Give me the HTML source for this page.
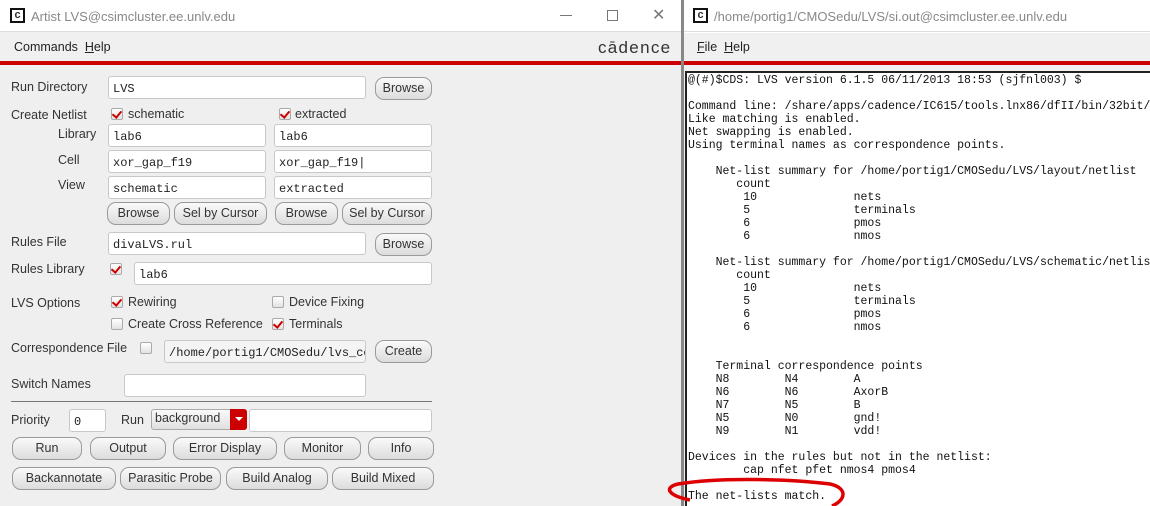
<!DOCTYPE html>
<html style="overflow:hidden;width:1150px;height:506px"><head><meta charset="utf-8"><style>
*{box-sizing:border-box;margin:0;padding:0}
body{width:1150px;height:506px;overflow:hidden;background:#fff;position:relative;font-family:"Liberation Sans",sans-serif;font-size:12.5px;color:#333}
.a{position:absolute;white-space:nowrap}
.in{position:absolute;background:#fff;border:1px solid #c8c8c8;border-radius:3px;font-family:"Liberation Mono",monospace;font-size:12px;color:#222;padding:5px 0 0 4px;height:23px;white-space:nowrap;overflow:hidden}
.bt{position:absolute;height:23px;border:1px solid #9a9a9a;border-radius:9px;background:linear-gradient(#fafafa,#dcdcdc);text-align:center;line-height:21px;font-size:12.5px;color:#333}
.cb{position:absolute;width:12px;height:12px;border:1px solid #aaa;border-radius:2px;background:linear-gradient(#fff,#e2e2e2)}
.cb.k::after{content:"";position:absolute;left:2px;top:0px;width:4px;height:7px;border-right:2.5px solid #c00;border-bottom:2.5px solid #c00;transform:rotate(40deg)}
.t{position:absolute;left:688px;font-family:"Liberation Mono",monospace;font-size:11.5px;line-height:13px;color:#111;white-space:pre}
.lbl{position:absolute;white-space:nowrap;line-height:14px}
</style></head><body>
<!-- left window -->
<div class="a" style="left:0;top:0;width:681px;height:506px;background:#efefef"></div>
<div class="a" style="left:0;top:0;width:681px;height:32px;background:#fff;border-bottom:1px solid #ddd"></div>
<div class="a" style="left:10px;top:8px;width:15px;height:15px;border:2px solid #111;font:bold 11px 'Liberation Sans';text-align:center;line-height:11px">c</div>
<div class="a" style="left:31px;top:9px;font-size:13px;color:#888">Artist LVS@csimcluster.ee.unlv.edu</div>
<div class="a" style="left:560px;top:15px;width:12px;height:1px;background:#777"></div>
<div class="a" style="left:607px;top:10px;width:11px;height:11px;border:1px solid #777"></div>
<div class="a" style="left:652px;top:5px;font-size:16px;color:#777">✕</div>
<div class="a" style="left:0;top:33px;width:681px;height:29px;background:#f0f0f0"></div>
<div class="a" style="left:14px;top:40px;font-size:12.5px;color:#222">Commands&nbsp;&nbsp;<u>H</u>elp</div>
<div class="a" style="left:598px;top:38px;font-size:17px;letter-spacing:1.3px;color:#333">cādence</div>
<div class="a" style="left:0;top:61px;width:681px;height:4px;background:#c00"></div>
<div class="a" style="left:681px;top:0;width:3px;height:506px;background:#888"></div>

<div class="lbl" style="left:11px;top:80px">Run Directory</div>
<div class="in" style="left:108px;top:76px;width:258px">LVS</div>
<div class="bt" style="left:375px;top:77px;width:57px">Browse</div>
<div class="lbl" style="left:11px;top:108px">Create Netlist</div>
<div class="cb k" style="left:111px;top:108px"></div><div class="lbl" style="left:128px;top:107px">schematic</div>
<div class="cb k" style="left:279px;top:108px"></div><div class="lbl" style="left:295px;top:107px">extracted</div>
<div class="lbl" style="left:58px;top:127px">Library</div>
<div class="in" style="left:108px;top:124px;width:158px">lab6</div>
<div class="in" style="left:274px;top:124px;width:158px">lab6</div>
<div class="lbl" style="left:58px;top:153px">Cell</div>
<div class="in" style="left:108px;top:150px;width:158px">xor_gap_f19</div>
<div class="in" style="left:274px;top:150px;width:158px">xor_gap_f19|</div>
<div class="lbl" style="left:58px;top:178px">View</div>
<div class="in" style="left:108px;top:176px;width:158px">schematic</div>
<div class="in" style="left:274px;top:176px;width:158px">extracted</div>
<div class="bt" style="left:107px;top:202px;width:63px">Browse</div>
<div class="bt" style="left:174px;top:202px;width:93px">Sel by Cursor</div>
<div class="bt" style="left:275px;top:202px;width:63px">Browse</div>
<div class="bt" style="left:342px;top:202px;width:90px">Sel by Cursor</div>
<div class="lbl" style="left:11px;top:235px">Rules File</div>
<div class="in" style="left:108px;top:232px;width:258px">divaLVS.rul</div>
<div class="bt" style="left:375px;top:233px;width:57px">Browse</div>
<div class="lbl" style="left:11px;top:262px">Rules Library</div>
<div class="cb k" style="left:110px;top:263px"></div>
<div class="in" style="left:134px;top:262px;width:298px">lab6</div>
<div class="lbl" style="left:11px;top:296px">LVS Options</div>
<div class="cb k" style="left:111px;top:296px"></div><div class="lbl" style="left:128px;top:295px">Rewiring</div>
<div class="cb" style="left:272px;top:296px"></div><div class="lbl" style="left:289px;top:295px">Device Fixing</div>
<div class="cb" style="left:111px;top:318px"></div><div class="lbl" style="left:128px;top:317px">Create Cross Reference</div>
<div class="cb k" style="left:272px;top:318px"></div><div class="lbl" style="left:289px;top:317px">Terminals</div>
<div class="lbl" style="left:11px;top:341px">Correspondence File</div>
<div class="cb" style="left:140px;top:342px"></div>
<div class="in" style="left:164px;top:340px;width:202px;background:#f4f4f4">/home/portig1/CMOSedu/lvs_co</div>
<div class="bt" style="left:375px;top:340px;width:57px">Create</div>
<div class="lbl" style="left:11px;top:377px">Switch Names</div>
<div class="in" style="left:124px;top:374px;width:242px"></div>
<div class="a" style="left:11px;top:401px;width:421px;height:1px;background:#777"></div>
<div class="lbl" style="left:11px;top:413px">Priority</div>
<div class="in" style="left:69px;top:409px;width:37px">0</div>
<div class="lbl" style="left:121px;top:413px">Run</div>
<div class="a" style="left:151px;top:409px;width:96px;height:21px;border:1px solid #aaa;border-radius:3px;background:linear-gradient(#fafafa,#e0e0e0);padding:1px 0 0 3px;font-size:12.5px">background</div>
<div class="a" style="left:230px;top:409px;width:17px;height:21px;background:#c00;border-radius:0 3px 3px 0"></div>
<div class="a" style="left:235px;top:417px;width:0;height:0;border-left:4px solid transparent;border-right:4px solid transparent;border-top:4px solid #fff"></div>
<div class="in" style="left:249px;top:409px;width:183px"></div>
<div class="bt" style="left:12px;top:437px;width:70px">Run</div>
<div class="bt" style="left:90px;top:437px;width:76px">Output</div>
<div class="bt" style="left:173px;top:437px;width:104px">Error Display</div>
<div class="bt" style="left:284px;top:437px;width:77px">Monitor</div>
<div class="bt" style="left:368px;top:437px;width:66px">Info</div>
<div class="bt" style="left:12px;top:467px;width:104px">Backannotate</div>
<div class="bt" style="left:120px;top:467px;width:101px">Parasitic Probe</div>
<div class="bt" style="left:226px;top:467px;width:102px">Build Analog</div>
<div class="bt" style="left:332px;top:467px;width:102px">Build Mixed</div>

<!-- right window -->
<div class="a" style="left:684px;top:0;width:466px;height:32px;background:#fff;border-bottom:1px solid #ddd"></div>
<div class="a" style="left:693px;top:8px;width:15px;height:15px;border:2px solid #111;font:bold 11px 'Liberation Sans';text-align:center;line-height:11px">c</div>
<div class="a" style="left:714px;top:9px;font-size:13px;color:#888">/home/portig1/CMOSedu/LVS/si.out@csimcluster.ee.unlv.edu</div>
<div class="a" style="left:684px;top:33px;width:466px;height:28px;background:#f0f0f0"></div>
<div class="a" style="left:697px;top:40px;font-size:12.5px;color:#222"><u>F</u>ile&nbsp;&nbsp;<u>H</u>elp</div>
<div class="a" style="left:684px;top:61px;width:466px;height:4px;background:#c00"></div>
<div class="a" style="left:684px;top:65px;width:466px;height:441px;background:#f0f0f0"></div>
<div class="a" style="left:685px;top:71px;width:465px;height:435px;background:#fff;border:2px solid #222;border-right:none;border-bottom:none"></div>
<div class="t" style="top:74px;height:432px;overflow:hidden">@(#)$CDS: LVS version 6.1.5 06/11/2013 18:53 (sjfnl003) $

Command line: /share/apps/cadence/IC615/tools.lnx86/dfII/bin/32bit/LVS
Like matching is enabled.
Net swapping is enabled.
Using terminal names as correspondence points.

    Net-list summary for /home/portig1/CMOSedu/LVS/layout/netlist
       count
        10              nets
        5               terminals
        6               pmos
        6               nmos

    Net-list summary for /home/portig1/CMOSedu/LVS/schematic/netlist
       count
        10              nets
        5               terminals
        6               pmos
        6               nmos


    Terminal correspondence points
    N8        N4        A
    N6        N6        AxorB
    N7        N5        B
    N5        N0        gnd!
    N9        N1        vdd!

Devices in the rules but not in the netlist:
        cap nfet pfet nmos4 pmos4

The net-lists match.</div>
<svg class="a" style="left:0;top:0" width="1150" height="506"><path d="M690 500 C670 496 662 488 678 484 C720 477 790 479 830 484 C848 488 846 500 832 506" fill="none" stroke="#d00" stroke-width="3.5"/></svg>
</body></html>
